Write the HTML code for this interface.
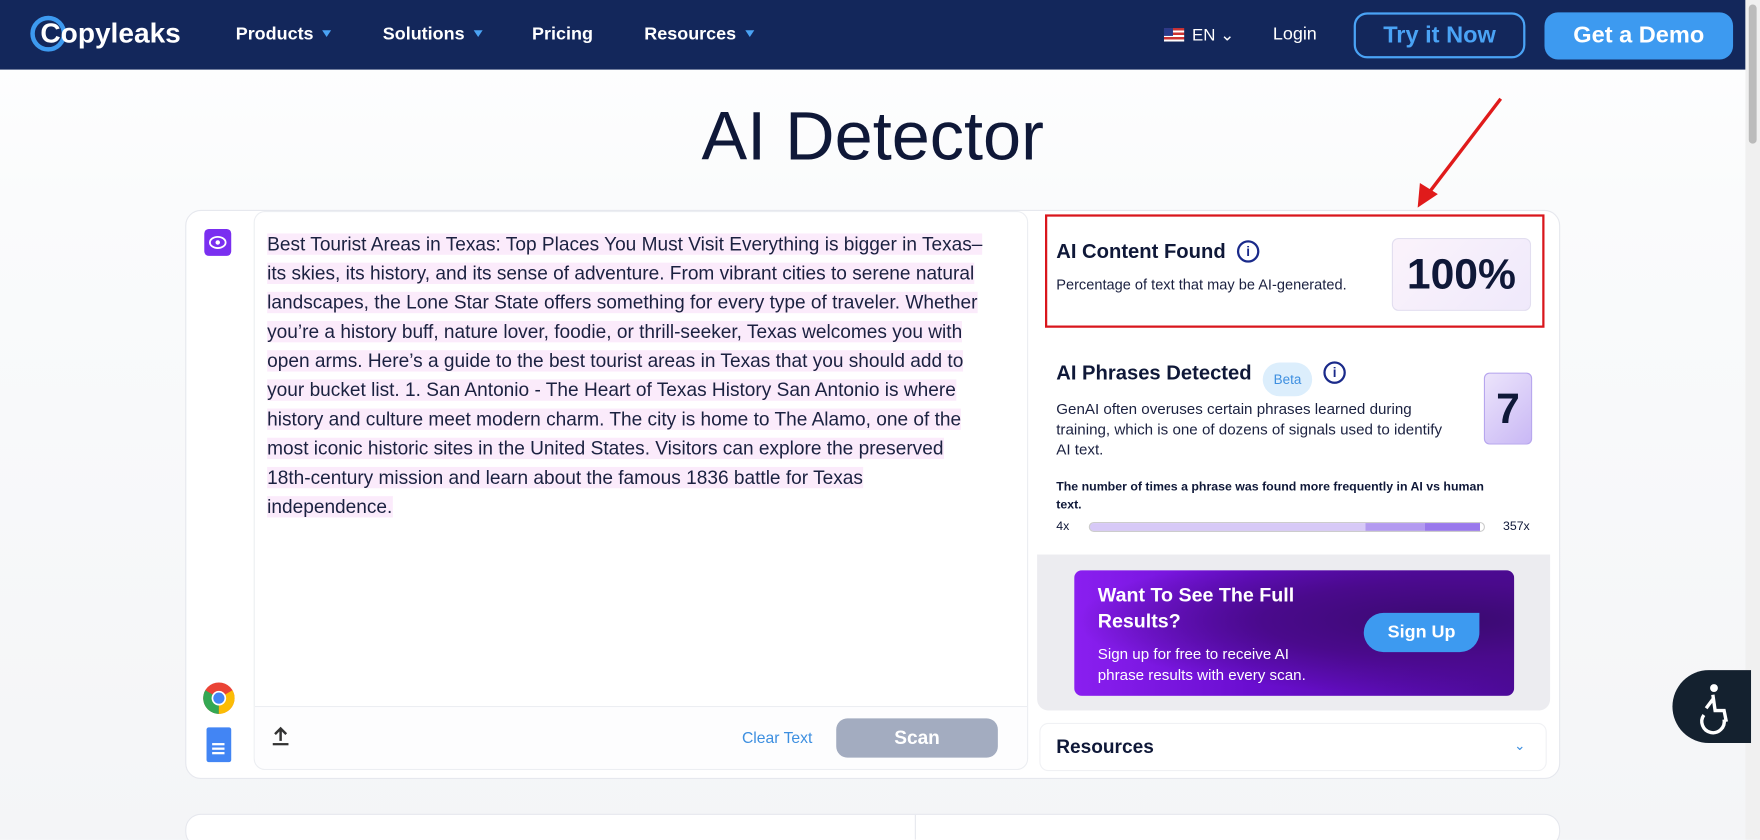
<!DOCTYPE html>
<html><head><meta charset="utf-8"><style>
*{box-sizing:border-box;margin:0;padding:0}
html,body{width:1760px;height:840px;overflow:hidden;background:#f6f7f9}
#w{width:1568px;height:748px;transform:scale(1.12245);transform-origin:0 0;position:relative;font-family:"Liberation Sans",sans-serif;color:#0f1838;
background:linear-gradient(180deg,#fff 0,#fafbfc 180px,#f4f5f7 100%)}
.a{position:absolute}
nav{position:absolute;left:0;top:0;width:1555px;height:62px;background:#13275b}
nav .l{position:absolute;color:#fff;font-weight:bold;font-size:16px;top:22px}
.tri{display:inline-block;width:0;height:0;border-left:4px solid transparent;border-right:4px solid transparent;border-top:6px solid #4aa3f5;margin-left:8px;vertical-align:2px}
.sb{position:absolute;right:0;top:0;width:13px;height:748px;background:#f0f0f0}
.card{position:absolute;left:165px;top:187px;width:1225px;height:507px;background:#fff;border:1px solid #e6e8ee;border-radius:14px}
.txt{position:absolute;left:226px;top:188px;width:690px;height:498px;border:1px solid #eceef2;border-radius:10px;background:#fff}
.p{position:absolute;left:238px;top:205px;font-size:17px;line-height:26px;color:#1b2140;white-space:nowrap}
.p span{background:#fbebfb}
.sec{font-weight:bold;font-size:18px;color:#0f1838}
.info{display:inline-block;width:20px;height:20px;border:2px solid #1a2a8a;border-radius:50%;font-size:12px;text-align:center;line-height:16px;color:#1a2a8a;font-weight:bold;vertical-align:2px;margin-left:10px}
</style></head><body><div id="w">
<nav>
<svg class="a" style="left:26px;top:13px" width="34" height="34"><circle cx="17" cy="17" r="14" fill="none" stroke="#3d9af0" stroke-width="4"/></svg>
<div class="a" style="left:36px;top:16px;color:#fff;font-size:25px;font-weight:bold">Copyleaks</div>
<div class="l" style="left:210px">Products<span class="tri"></span></div>
<div class="l" style="left:341px">Solutions<span class="tri"></span></div>
<div class="l" style="left:474px">Pricing</div>
<div class="l" style="left:574px">Resources<span class="tri"></span></div>
<div class="a" style="left:1037px;top:25px;width:18px;height:12px;background:repeating-linear-gradient(#c33 0 2px,#fff 2px 4px)"><div style="width:8px;height:7px;background:#2a3a8a"></div></div>
<div class="l" style="left:1062px;font-weight:normal;font-size:15px">EN &#8964;</div>
<div class="l" style="left:1134px;font-weight:normal;font-size:16px">Login</div>
<div class="a" style="left:1206px;top:11px;width:153px;height:41px;border:2px solid #4aa3f5;border-radius:12px;color:#4aa3f5;font-weight:bold;font-size:21px;text-align:center;line-height:37px">Try it Now</div>
<div class="a" style="left:1376px;top:11px;width:168px;height:42px;background:#3d9af0;border-radius:12px;color:#fff;font-weight:bold;font-size:21px;text-align:center;line-height:42px">Get a Demo</div>
</nav>
<div class="sb"><div style="position:absolute;left:3px;top:4px;width:7px;height:124px;background:#bbb;border-radius:4px"></div></div>
<div class="a" style="left:0;width:1555px;top:86px;text-align:center;font-size:61px;color:#0f1838">AI Detector</div>
<svg class="a" style="left:1255px;top:85px" width="90" height="105"><line x1="82" y1="3" x2="14" y2="92" stroke="#e01b1b" stroke-width="3"/><polygon points="8,100 10,78 26,88" fill="#e01b1b"/></svg>
<div class="card"></div>
<div class="a" style="left:182px;top:204px;width:24px;height:24px;background:#7a2ff0;border-radius:4px"><svg width="24" height="24"><ellipse cx="12" cy="12" rx="7" ry="5" fill="none" stroke="#fff" stroke-width="1.6"/><circle cx="12" cy="12" r="2" fill="#fff"/></svg></div>
<svg class="a" style="left:179px;top:606px" width="32" height="32"><circle cx="16" cy="16" r="14" fill="#ea4335"/><path d="M16 16 L3.9 9 A14 14 0 0 0 16 30Z" fill="#34a853"/><path d="M16 16 L16 30 A14 14 0 0 0 28.1 9Z" fill="#fbbc05"/><circle cx="16" cy="16" r="6.5" fill="#fff"/><circle cx="16" cy="16" r="5" fill="#4285f4"/></svg>
<div class="a" style="left:184px;top:648px;width:22px;height:31px;background:#4285f4;border-radius:2px"><div style="position:absolute;left:5px;top:14px;width:11px;height:2px;background:#fff;box-shadow:0 4px #fff,0 8px #fff"></div></div>
<div class="txt"></div>
<div class="p">
<span>Best Tourist Areas in Texas: Top Places You Must Visit Everything is bigger in Texas–</span><br>
<span>its skies, its history, and its sense of adventure. From vibrant cities to serene natural</span><br>
<span>landscapes, the Lone Star State offers something for every type of traveler. Whether</span><br>
<span>you’re a history buff, nature lover, foodie, or thrill-seeker, Texas welcomes you with</span><br>
<span>open arms. Here’s a guide to the best tourist areas in Texas that you should add to</span><br>
<span>your bucket list. 1. San Antonio - The Heart of Texas History San Antonio is where</span><br>
<span>history and culture meet modern charm. The city is home to The Alamo, one of the</span><br>
<span>most iconic historic sites in the United States. Visitors can explore the preserved</span><br>
<span>18th-century mission and learn about the famous 1836 battle for Texas</span><br>
<span>independence.</span></div>
<div class="a" style="left:227px;top:629px;width:688px;height:56px;border-top:1px solid #eceef2;background:#fdfdfe;border-radius:0 0 10px 10px"></div>
<div class="a" style="left:242px;top:647px;width:16px;height:18px"><svg width="16" height="18"><path d="M8 2 L8 13 M3 7 L8 2 L13 7" stroke="#333" stroke-width="2.2" fill="none"/><rect x="1" y="15" width="14" height="2" fill="#333"/></svg></div>
<div class="a" style="left:661px;top:649px;font-size:14px;color:#3d8fe0">Clear Text</div>
<div class="a" style="left:745px;top:640px;width:144px;height:35px;background:#a3acc0;border-radius:10px;color:#fff;font-weight:bold;font-size:17px;text-align:center;line-height:35px">Scan</div>
<div class="a" style="left:931px;top:191px;width:445px;height:101px;border:2px solid #d9161c"></div>
<div class="a sec" style="left:941px;top:214px">AI Content Found<span class="info">i</span></div>
<div class="a" style="left:941px;top:246px;font-size:13px;color:#1b2140">Percentage of text that may be AI-generated.</div>
<div class="a" style="left:1240px;top:212px;width:124px;height:65px;background:linear-gradient(135deg,#fbf3fb,#efe9fb);border:1px solid #e2def0;border-radius:6px;font-weight:bold;font-size:38px;text-align:center;line-height:65px;color:#0f1838">100%</div>
<div class="a sec" style="left:941px;top:322px">AI Phrases Detected<span style="display:inline-block;margin-left:10px;width:44px;height:30px;border-radius:15px;background:#dceefc;color:#3d8fe0;font-weight:normal;font-size:12px;text-align:center;line-height:30px;vertical-align:-4px">Beta</span><span class="info">i</span></div>
<div class="a" style="left:941px;top:356px;font-size:13.5px;line-height:18px;color:#1b2140">GenAI often overuses certain phrases learned during<br>training, which is one of dozens of signals used to identify<br>AI text.</div>
<div class="a" style="left:1322px;top:332px;width:43px;height:64px;background:linear-gradient(135deg,#ece4fb,#c9b8f5);border:1px solid #b7a6ee;border-radius:5px;font-weight:bold;font-size:38px;text-align:center;line-height:64px">7</div>
<div class="a" style="left:941px;top:426px;font-size:11px;font-weight:bold;line-height:16px;color:#0f1838">The number of times a phrase was found more frequently in AI vs human<br>text.</div>
<div class="a" style="left:941px;top:463px;font-size:11px">4x</div>
<div class="a" style="left:1339px;top:463px;font-size:11px">357x</div>
<div class="a" style="left:970px;top:465px;width:353px;height:9px;border:1px solid #ccc;border-radius:5px;background:linear-gradient(90deg,#d7c9f7 0 70%,#b39af0 70% 85%,#9978ec 85% 99%,#fff 99%)"></div>
<div class="a" style="left:924px;top:494px;width:457px;height:139px;background:#ececf0;border-radius:0 0 10px 10px"></div>
<div class="a" style="left:957px;top:508px;width:392px;height:112px;border-radius:7px;background:radial-gradient(ellipse at 85% 40%,#3a0a70 0,#4a0a8c 35%,transparent 70%),linear-gradient(90deg,#8a1ff0 0,#6a0ed0 40%,#4c0a98 100%)"></div>
<div class="a" style="left:978px;top:519px;color:#fff;font-weight:bold;font-size:17.5px;line-height:23px">Want To See The Full<br>Results?</div>
<div class="a" style="left:978px;top:573px;color:#fff;font-size:13.5px;line-height:19px">Sign up for free to receive AI<br>phrase results with every scan.</div>
<div class="a" style="left:1215px;top:546px;width:103px;height:35px;background:#3d9af0;border-radius:18px 0 18px 18px;color:#fff;font-weight:bold;font-size:16px;text-align:center;line-height:35px">Sign Up</div>
<div class="a" style="left:926px;top:644px;width:452px;height:43px;border:1px solid #f0f1f4;border-radius:8px"></div>
<div class="a sec" style="left:941px;top:656px;font-size:17px">Resources</div>
<div class="a" style="left:1349px;top:657px;color:#3d8fe0;font-size:12px">&#8964;</div>
<div class="a" style="left:1490px;top:597px;width:70px;height:65px;background:#14212f;border-radius:33px 0 0 33px"><svg width="70" height="65"><circle cx="37" cy="16" r="3.5" fill="#fff"/><path d="M36 22 L38 36 L46 36 L48 46 M30 34 L36 26 M28 40 A10 10 0 1 0 46 44" stroke="#fff" stroke-width="3" fill="none"/></svg></div>
<div class="a" style="left:165px;top:725px;width:1225px;height:30px;background:#fff;border:1px solid #e6e8ee;border-radius:14px"></div>
<div class="a" style="left:815px;top:726px;width:1px;height:22px;background:#e6e8ee"></div>
</div></body></html>
